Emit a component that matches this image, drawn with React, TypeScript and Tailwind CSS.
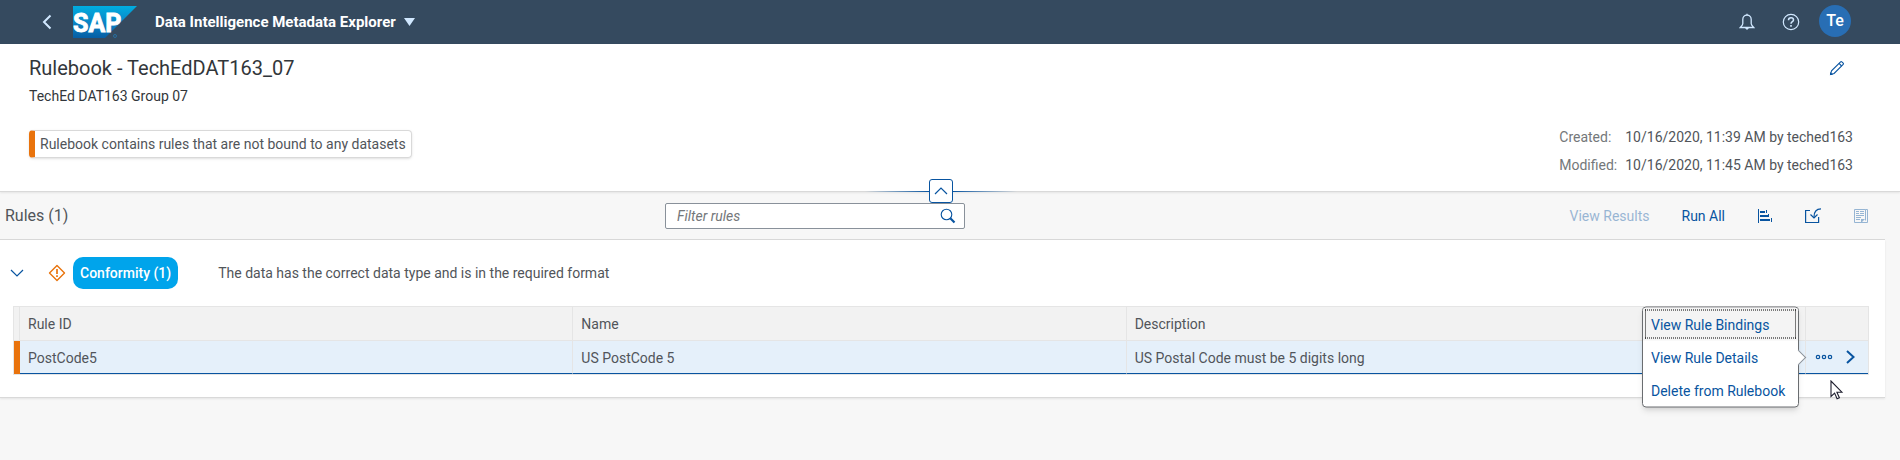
import { useState } from "react";

function BackIcon() {
  return (
    <svg width="16" height="16" viewBox="0 0 16 16" fill="none" stroke="#d1e8ff" strokeWidth="2" aria-hidden="true">
      <path d="M11.500 1.500 5 8l6.500 6.500" />
    </svg>
  );
}

function SapLogo() {
  return (
    <svg width="64" height="32" viewBox="0 0 64 32" role="img" aria-label="SAP">
      <defs>
        <linearGradient id="sap" x1="0" y1="0" x2="0" y2="1">
          <stop offset="0" stopColor="#00ade0" />
          <stop offset="0.5" stopColor="#0a86c6" />
          <stop offset="1" stopColor="#075ea4" />
        </linearGradient>
      </defs>
      <path d="M0 0h64L32 32H0z" fill="url(#sap)" />
      <text x="0" y="26" fontFamily="Roboto, sans-serif" fontWeight="700" fontSize="25" fill="#fff" stroke="#fff" strokeWidth="0.9">
        SAP
      </text>
      <circle cx="42" cy="30" r="1.500" fill="none" stroke="#2a6f9f" />
    </svg>
  );
}

function BellIcon() {
  return (
    <svg width="16" height="18" viewBox="0 0 16 18" fill="none" stroke="#d1e8ff" strokeWidth="1.300" aria-hidden="true">
      <path d="M8 2.200c-2.700 0-4.200 1.800-4.200 4.300v4.200c0 1-.6 1.900-2.500 3.800h13.400c-1.900-1.900-2.500-2.800-2.500-3.800V6.500c0-2.500-1.500-4.300-4.200-4.300z" />
      <path d="M8 .8v1.500" />
      <path d="M6 15h4l-2 2z" fill="#d1e8ff" stroke="none" />
    </svg>
  );
}

function HelpIcon() {
  return (
    <svg width="18" height="18" viewBox="0 0 18 18" fill="none" stroke="#d1e8ff" strokeWidth="1.200" aria-hidden="true">
      <circle cx="9" cy="9" r="7.700" />
      <path d="M6.500 7.200c0-1.500 1-2.400 2.500-2.400s2.500.9 2.500 2.200c0 1.700-2.500 1.700-2.500 3.700" strokeWidth="1.500" />
      <path d="M9 12v1.700" strokeWidth="1.600" />
    </svg>
  );
}

function PencilIcon() {
  return (
    <svg width="16" height="16" viewBox="0 0 16 16" fill="none" stroke="#0854a0" strokeWidth="1.100" aria-hidden="true">
      <path d="M1.600 14.400 2.500 10.900 11.600 1.800c.4-.4.8-.4 1.200 0l1.400 1.400c.4.400.4.800 0 1.200L5.100 13.500z" />
      <path d="M10 3.400 12.600 6" />
      <path d="M1 15v-3l3 3z" fill="#0854a0" stroke="none" />
    </svg>
  );
}

function SearchIcon() {
  return (
    <svg width="16" height="16" viewBox="0 0 16 16" fill="none" stroke="#0854a0" aria-hidden="true">
      <circle cx="6.500" cy="6.500" r="5.300" strokeWidth="1.100" />
      <path d="M10.300 10.300 14.500 14.500" strokeWidth="2.200" />
    </svg>
  );
}

function ChartIcon() {
  return (
    <svg width="16" height="16" viewBox="0 0 16 16" fill="#0854a0" aria-hidden="true">
      <path d="M1 1h1v14H1zM3 3h5v2H3zM3 7h8v2H3zM3 11h10v2H3zM9 2h1v3H9zM11 6h1v3h-1zM14 10h1v4h-1z" />
    </svg>
  );
}

function ImportIcon() {
  return (
    <svg width="18" height="16" viewBox="0 0 18 16" fill="none" stroke="#0854a0" strokeWidth="1.200" aria-hidden="true">
      <path d="M6 2.500H1.600v12h13V9" />
      <path d="M17 .8c-4.500 0-7 2.400-7 8.200" />
      <path d="M6.500 6.500 10 10l3.500-3.500" />
    </svg>
  );
}

function ReportIcon() {
  return (
    <svg width="16" height="16" viewBox="0 0 16 16" fill="none" stroke="#0854a0" aria-hidden="true">
      <path d="M11 14.500H1.500v-13h11v11M12.500 1.500h2v13H8" />
      <path d="M3 3.500h3M7 3.500h4M3 5.500h3M7 5.500h4M3 7.500h8M3 9.500h5M3 11.500h4" />
      <path d="M8 15v-4h4z" fill="#0854a0" stroke="none" />
    </svg>
  );
}

function WarningIcon() {
  return (
    <svg width="18" height="18" viewBox="0 0 18 18" fill="none" stroke="#e9730c" aria-hidden="true">
      <path d="M9 1.500 16.500 9 9 16.500 1.500 9z" strokeWidth="1.400" strokeLinejoin="round" />
      <path d="M9 5v5M9 11.300v1.700" strokeWidth="1.700" />
    </svg>
  );
}

function Chevron({ up = false }: { up?: boolean }) {
  return (
    <svg width="14" height="8" viewBox="0 0 14 8" fill="none" stroke="#0854a0" strokeWidth="1.200" aria-hidden="true">
      <path d={up ? "M1 7 7 1l6 6" : "M1 1l6 6 6-6"} />
    </svg>
  );
}

function ShellBar() {
  return (
    <header className="flex h-11 items-center bg-[#354a5f] pr-[49px] pl-[39px]">
      <button type="button" aria-label="Back" className="mr-[18px]">
        <BackIcon />
      </button>
      <SapLogo />
      <button type="button" className="ml-[18px] flex items-center gap-2 text-[15px] font-bold text-white">
        Data Intelligence Metadata Explorer
        <svg width="11" height="8" viewBox="0 0 11 8" fill="#d1e8ff" aria-hidden="true">
          <path d="M0 0h11L5.500 8z" />
        </svg>
      </button>
      <div className="ml-auto flex items-center">
        <button type="button" aria-label="Notifications" className="mr-[27px]">
          <BellIcon />
        </button>
        <button type="button" aria-label="Help" className="mr-[19px]">
          <HelpIcon />
        </button>
        <button type="button" className="mb-0.5 size-8 rounded-full bg-[#286eb4] text-base font-medium text-white">
          Te
        </button>
      </div>
    </header>
  );
}

function RulebookHeader() {
  return (
    <section className="relative z-10 flex h-[148px] justify-between border-b border-[#d9d9d9] bg-white pr-[47px] pl-[29px] shadow-[0_1px_2px_rgba(0,0,0,0.08)]">
      <div className="flex flex-col items-start pt-3">
        <h1 className="text-xl leading-6 text-[#32363a]">Rulebook - TechEdDAT163_07</h1>
        <p className="mt-1.5 text-sm leading-5 text-[#32363a]">TechEd DAT163 Group 07</p>
        <div className="mt-6 flex h-7 items-center rounded border border-l-[6px] border-[#d9d9d9] border-l-[#e9730c] px-[5px] text-sm text-[#51555a] shadow-sm">
          Rulebook contains rules that are not bound to any datasets
        </div>
      </div>
      <div className="flex flex-col items-end pt-4">
        <button type="button" aria-label="Edit" className="mr-2">
          <PencilIcon />
        </button>
        <dl className="mt-[51px] grid grid-cols-[auto_auto] gap-x-2 gap-y-2 text-sm leading-5 text-[#51555a]">
          <dt className="text-[#74777a]">Created:</dt>
          <dd>10/16/2020, 11:39 AM by teched163</dd>
          <dt className="text-[#74777a]">Modified:</dt>
          <dd>10/16/2020, 11:45 AM by teched163</dd>
        </dl>
      </div>
      <div className="absolute inset-x-0 -bottom-3 mr-[18px] flex h-6 items-center justify-center">
        <span className="h-px w-16 bg-linear-to-r from-transparent to-[#0854a0]" />
        <button
          type="button"
          aria-label="Collapse header"
          className="flex size-6 items-center justify-center rounded-[3px] border border-[#0854a0] bg-white"
        >
          <Chevron up />
        </button>
        <span className="h-px w-16 bg-linear-to-l from-transparent to-[#0854a0]" />
      </div>
    </section>
  );
}

function RulesToolbar() {
  const [filter, setFilter] = useState("");
  return (
    <div className="mr-[15px] flex h-12 items-center justify-between border-b border-[#d9d9d9] pr-4 pl-[5px] text-sm text-[#0854a0]">
      <h2 className="text-base text-[#51555a]">Rules (1)</h2>
      <div className="flex h-[26px] w-[300px] items-center rounded-xs border border-[#89919a] bg-white pr-2">
        <input
          type="search"
          aria-label="Filter rules"
          placeholder="Filter rules"
          value={filter}
          onChange={(e) => setFilter(e.target.value)}
          className="min-w-0 flex-1 bg-transparent px-[11px] text-sm text-[#32363a] outline-none placeholder:text-[#74777a] placeholder:italic"
        />
        <button type="button" aria-label="Search">
          <SearchIcon />
        </button>
      </div>
      <div className="flex items-center">
        <button type="button" disabled className="px-2 opacity-40">
          View Results
        </button>
        <button type="button" className="ml-4 px-2">
          Run All
        </button>
        <button type="button" aria-label="Fact sheet" className="ml-6">
          <ChartIcon />
        </button>
        <button type="button" aria-label="Import rules" className="ml-[31px]">
          <ImportIcon />
        </button>
        <button type="button" aria-label="Report" disabled className="ml-[31px] opacity-40">
          <ReportIcon />
        </button>
      </div>
    </div>
  );
}

function RuleMenu() {
  return (
    <div
      role="menu"
      className="absolute top-1/2 right-full z-20 mr-[7px] w-[157px] -translate-y-1/2 rounded border border-[#6a6d70] bg-white text-sm text-[#0854a0] shadow-md"
    >
      <span className="absolute top-1/2 -right-[6px] size-[11px] -translate-y-1/2 rotate-45 border-t border-r border-[#89919a] bg-white" />
      <div className="relative flex flex-col overflow-hidden rounded-[3px]">
        <button
          role="menuitem"
          type="button"
          className="h-[33px] bg-[#f4f4f4] px-2 text-left outline -outline-offset-3 outline-black outline-dotted"
        >
          View Rule Bindings
        </button>
        <button role="menuitem" type="button" className="h-[33px] px-2 text-left">
          View Rule Details
        </button>
        <button role="menuitem" type="button" className="h-[33px] px-2 text-left whitespace-nowrap">
          Delete from Rulebook
        </button>
      </div>
    </div>
  );
}

function RulesTable() {
  const head = "h-[34px] border-r border-b border-[#e5e5e5] px-2 font-normal";
  const cell = "h-[33px] border-r border-b border-r-[#e5e5e5] border-b-[#0854a0] px-2 pt-0.5";
  return (
    <table className="w-full table-fixed border-separate border-spacing-0 border border-[#e5e5e5] text-left text-sm text-[#51555a]">
      <colgroup>
        <col className="w-1.5" />
        <col />
        <col />
        <col />
        <col className="w-[126px]" />
        <col className="w-[62px]" />
      </colgroup>
      <thead className="bg-[#f2f2f2]">
        <tr>
          <th className="border-r border-b border-[#e5e5e5] p-0" aria-label="Status" />
          <th className={head}>Rule ID</th>
          <th className={head}>Name</th>
          <th className={head}>Description</th>
          <th className={head} />
          <th className="border-b border-[#e5e5e5]" aria-label="Actions" />
        </tr>
      </thead>
      <tbody className="bg-[#e5f0fa]">
        <tr>
          <td className="bg-[#e9730c] p-0" />
          <td className={cell}>PostCode5</td>
          <td className={cell}>US PostCode 5</td>
          <td className={cell}>US Postal Code must be 5 digits long</td>
          <td className={cell} />
          <td className="border-b border-[#0854a0] p-0">
            <div className="relative flex items-center justify-between pr-[13px] pl-[9px]">
              <button type="button" aria-label="More" aria-haspopup="menu">
                <svg width="18" height="8" viewBox="0 0 18 8" fill="none" stroke="#0854a0" strokeWidth="1.200" aria-hidden="true">
                  <circle cx="3" cy="4" r="1.700" />
                  <circle cx="9" cy="4" r="1.700" />
                  <circle cx="15" cy="4" r="1.700" />
                </svg>
              </button>
              <button type="button" aria-label="Open rule">
                <svg width="9" height="14" viewBox="0 0 9 14" fill="none" stroke="#0854a0" strokeWidth="2" aria-hidden="true">
                  <path d="M1 1l6.500 6L1 13" />
                </svg>
              </button>
              <RuleMenu />
              <svg
                width="14"
                height="20"
                viewBox="0 0 14 20"
                className="absolute top-[30px] left-6"
                fill="#fff"
                stroke="#1c1c2c"
                strokeWidth="1.100"
                aria-hidden="true"
              >
                <path d="M1 1v15.500l3.600-3.400 2.500 5.700 2.300-1-2.500-5.600h5z" />
              </svg>
            </div>
          </td>
        </tr>
      </tbody>
    </table>
  );
}

export default function App() {
  return (
    <div className="min-h-screen bg-[#f7f7f7] font-[Roboto,'Liberation_Sans',sans-serif]">
      <ShellBar />
      <RulebookHeader />
      <RulesToolbar />
      <section className="mr-[15px] border-b border-[#d9d9d9] bg-white pr-4 pb-[22px] pl-[13px] shadow-[0_1px_2px_rgba(0,0,0,0.08)]">
        <div className="flex h-[66px] items-center text-sm text-[#51555a]">
          <button type="button" aria-label="Collapse category" className="-ml-[3px]">
            <Chevron />
          </button>
          <span className="ml-6">
            <WarningIcon />
          </span>
          <span className="ml-[7px] flex h-8 items-center rounded-[10px] bg-[#00a4eb] px-[7px] font-medium text-white">
            Conformity (1)
          </span>
          <p className="ml-10">The data has the correct data type and is in the required format</p>
        </div>
        <RulesTable />
      </section>
    </div>
  );
}
